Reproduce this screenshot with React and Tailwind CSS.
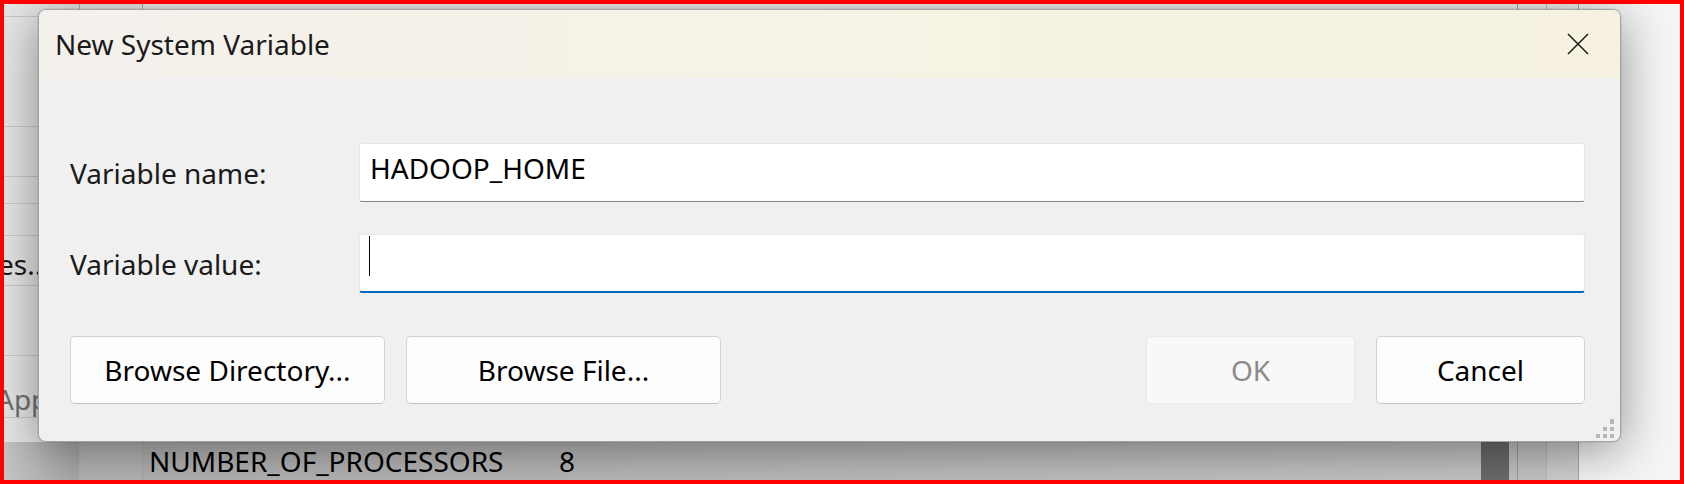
import React from "react";

const CloseIcon = () => (
  <svg width="22" height="22" viewBox="0 0 22 22">
    <path d="M1 1 L21 21 M21 1 L1 21" stroke="#1b1b1b" strokeWidth="1.5" fill="none" />
  </svg>
);

const Grip = () => (
  <svg width="18" height="19" viewBox="0 0 18 19">
    <rect x="14" y="0" width="4" height="5" fill="#b8b8b8" />
    <rect x="7" y="8" width="4" height="4" fill="#b8b8b8" />
    <rect x="14" y="8" width="4" height="4" fill="#b8b8b8" />
    <rect x="0" y="15" width="4" height="4" fill="#b8b8b8" />
    <rect x="7" y="15" width="4" height="4" fill="#b8b8b8" />
    <rect x="14" y="15" width="4" height="4" fill="#b8b8b8" />
  </svg>
);

const App = () => {

  return (

    <div className="relative w-[1684px] h-[484px] overflow-hidden border-4 border-[#ff0000] bg-[#f2f2f2] font-['Noto_Sans','Open_Sans',sans-serif] text-[28px] text-[#1a1a1a]">

      {/* WINDOW BEHIND */}

      <div className="flex h-full">

        {/* col A */}
        <div className="flex w-[76px] shrink-0 flex-col border-r border-[#b3b3b3] bg-[#e6e6e6]">
          <div className="h-[13px] border-b border-[#c8c8c8]" />
          <div className="h-[110px] border-b border-[#c8c8c8]" />
          <div className="h-[50px] border-b border-[#c8c8c8]" />
          <div className="h-[27px] border-b border-[#c8c8c8]" />
          <div className="h-[32px] border-b border-[#c8c8c8]" />
          <div className="flex h-[50px] items-center border-b border-[#c8c8c8] pt-[6px]">
            <span className="ml-[-6px] whitespace-nowrap leading-none">es...</span>
          </div>
          <div className="h-[70px] border-b border-[#c8c8c8]" />
          <div className="flex h-[62px] items-center border-b border-[#c8c8c8] pt-[24px]">
            <span className="ml-[-8px] whitespace-nowrap leading-none text-[#707070]">App</span>
          </div>
          <div className="flex-1" />
          <div className="h-[38px] bg-linear-to-r from-[#c4c4c4] to-[#a9a9a9]" />
        </div>

        {/* col B */}
        <div className="flex w-[63px] shrink-0 flex-col border-r border-[#a9a9a9] bg-[#ebebeb]">
          <div className="flex-1" />
          <div className="h-[38px] bg-[#b6b6b6]" />
        </div>

        {/* col C */}
        <div className="flex w-[1338px] shrink-0 flex-col bg-[#f0f0f0]">
          <div className="flex-1" />
          <div className="flex h-[38px] items-center bg-linear-to-r from-[#b3b3b3] to-[#c6c6c6] pl-[6px] leading-[38px] text-black">
            <span className="w-[410px]">NUMBER_OF_PROCESSORS</span>
            <span>8</span>
          </div>
        </div>

        {/* scrollbar */}
        <div className="flex w-[28px] shrink-0 flex-col bg-[#f0f0f0]">
          <div className="flex-1" />
          <div className="h-[38px] bg-[#6b6b6b]" />
        </div>

        <div className="flex w-[9px] shrink-0 flex-col border-r border-[#9d9d9d] bg-[#f0f0f0]">
          <div className="flex-1" />
          <div className="h-[38px] bg-[#c4c4c4]" />
        </div>

        <div className="flex w-[29px] shrink-0 flex-col border-r border-[#b9b9b9] bg-[#f0f0f0]">
          <div className="flex-1" />
          <div className="h-[38px] bg-[#c6c6c6]" />
        </div>

        <div className="flex w-[32px] shrink-0 flex-col border-r border-[#a9a9a9] bg-[#f0f0f0]">
          <div className="flex-1" />
          <div className="h-[38px] bg-[#d0d0d0]" />
        </div>

        <div className="flex-1 bg-[#f5f5f5]" />

      </div>

      {/* DIALOG */}

      <div className="absolute left-[34px] top-[5px] flex h-[433px] w-[1583px] flex-col overflow-hidden rounded-[8px] border border-[#a4a4a4] bg-[#f0f0f0] shadow-[0_0_0_1px_rgba(0,0,0,0.06),0_8px_50px_rgba(0,0,0,0.42)]">

        {/* TITLE */}

        <div className="flex h-[68px] shrink-0 items-center justify-between bg-linear-to-r from-[#f4f1ed] via-[#f6f2e5] to-[#f6f2df] pl-[16px] pr-[31px]">
          <span className="leading-[38px]">New System Variable</span>
          <CloseIcon />
        </div>

        {/* BODY */}

        <div className="flex flex-1 flex-col pl-[31px] pr-[35px] pt-[65px]">

          <div className="flex items-center">
            <label className="w-[289px] shrink-0 leading-[38px]">Variable name:</label>
            <div className="flex h-[59px] flex-1 items-center rounded-[3px] border border-[#e6e6e6] border-b-[#868686] bg-white pb-[10px] pl-[10px] leading-[38px] text-black">
              HADOOP_HOME
            </div>
          </div>

          <div className="mt-[32px] flex items-center">
            <label className="w-[289px] shrink-0 leading-[38px]">Variable value:</label>
            <div className="flex h-[59px] flex-1 items-start rounded-[3px] border border-[#e6e6e6] border-b-2 border-b-[#0067c0] bg-white pl-[9px] pt-[1px]">
              <div className="h-[40px] w-px bg-black" />
            </div>
          </div>

          <div className="mt-[43px] flex items-center justify-between">

            <div className="flex gap-[21px]">
              <button className="h-[68px] w-[315px] rounded-[5px] border border-[#d2d2d2] border-b-[#c0c0c0] bg-[#fdfdfd] leading-[38px] text-black">
                Browse Directory...
              </button>
              <button className="h-[68px] w-[315px] rounded-[5px] border border-[#d2d2d2] border-b-[#c0c0c0] bg-[#fdfdfd] leading-[38px] text-black">
                Browse File...
              </button>
            </div>

            <div className="flex gap-[21px]">
              <button className="h-[68px] w-[209px] rounded-[5px] border border-[#e9e9e9] bg-[#f8f8f8] leading-[38px] text-[#8a8a8a]">
                OK
              </button>
              <button className="h-[68px] w-[209px] rounded-[5px] border border-[#d2d2d2] border-b-[#c0c0c0] bg-[#fdfdfd] leading-[38px] text-black">
                Cancel
              </button>
            </div>

          </div>

        </div>

        <div className="absolute bottom-[3px] right-[6px]">
          <Grip />
        </div>

      </div>

    </div>

  );

};

export default App;
